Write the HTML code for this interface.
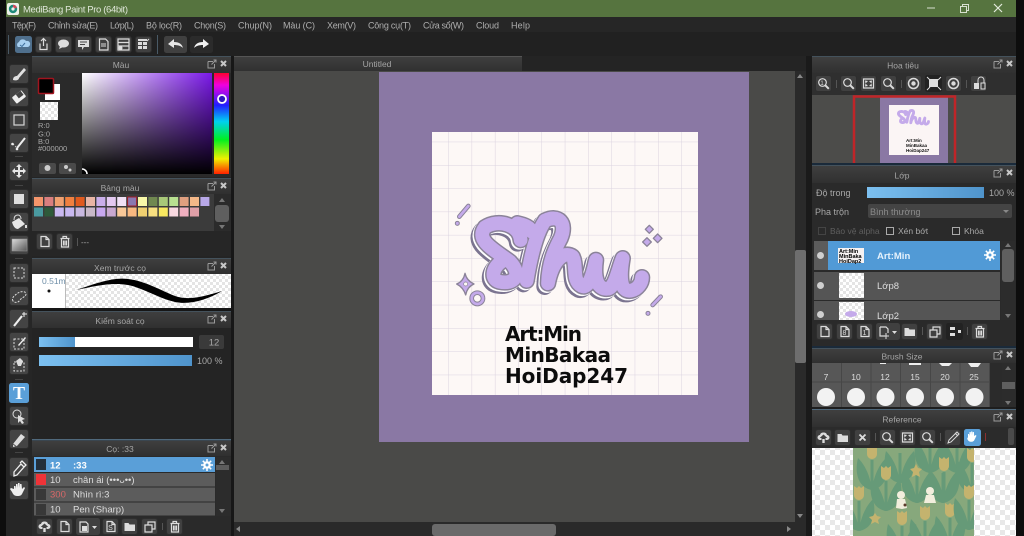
<!DOCTYPE html>
<html><head><meta charset="utf-8"><title>MediBang Paint Pro</title>
<style>
html,body{margin:0;padding:0;background:#0d0d0d;width:1024px;height:536px;overflow:hidden}
svg{display:block;filter:blur(.35px)}
text{font-family:"Liberation Sans","Noto Sans CJK SC",sans-serif;font-size:9px;fill:#a8a8a8}
.h{text-anchor:middle;fill:#a5a5a5;font-size:8.5px}
.s{fill:none;stroke:#dcdcdc;stroke-width:1.2}
.f{fill:#dcdcdc}
.m{font-size:9px;fill:#aeaeae}
</style></head><body>
<svg width="1024" height="536" viewBox="0 0 1024 536" xmlns="http://www.w3.org/2000/svg">
<defs>
<clipPath id="refclip"><rect x="853" y="448" width="121" height="88"/></clipPath>
<pattern id="ck" width="10" height="10" patternUnits="userSpaceOnUse"><rect width="10" height="10" fill="#fff"/><rect width="5" height="5" fill="#e8e8e8"/><rect x="5" y="5" width="5" height="5" fill="#e8e8e8"/></pattern>
<pattern id="ck2" width="6" height="6" patternUnits="userSpaceOnUse"><rect width="6" height="6" fill="#fff"/><rect width="3" height="3" fill="#e4e4e4"/><rect x="3" y="3" width="3" height="3" fill="#e4e4e4"/></pattern>
<pattern id="grid" x="432" y="132" width="23.3" height="23.3" patternUnits="userSpaceOnUse" patternTransform="translate(16.3,9.7)"><rect width="23.3" height="23.3" fill="#fdf8f6"/><path d="M0 0H23.3M0 0V23.3" stroke="#dbd3e0" stroke-width="1" fill="none"/></pattern>
<linearGradient id="hd" x1="0" y1="0" x2="0" y2="1"><stop offset="0" stop-color="#3f3f3f"/><stop offset="1" stop-color="#303030"/></linearGradient>
<linearGradient id="blue" x1="0" y1="0" x2="1" y2="0"><stop offset="0" stop-color="#7cc0f0"/><stop offset="1" stop-color="#4f94cc"/></linearGradient>
<linearGradient id="hue" x1="0" y1="0" x2="0" y2="1"><stop offset="0" stop-color="#ff0030"/><stop offset=".12" stop-color="#f000e0"/><stop offset=".32" stop-color="#2020ff"/><stop offset=".48" stop-color="#00d0f0"/><stop offset=".66" stop-color="#00f020"/><stop offset=".85" stop-color="#f0f000"/><stop offset="1" stop-color="#ff2000"/></linearGradient>
<linearGradient id="sat" x1="0" y1="0" x2="1" y2="0"><stop offset="0" stop-color="#fff"/><stop offset="1" stop-color="#7a18e8"/></linearGradient>
<linearGradient id="val" x1="0" y1="0" x2="0" y2="1"><stop offset="0" stop-color="#000" stop-opacity="0"/><stop offset="1" stop-color="#000"/></linearGradient>
<linearGradient id="gr" x1="0" y1="0" x2="1" y2="1"><stop offset="0" stop-color="#ddd"/><stop offset="1" stop-color="#555"/></linearGradient>

<g id="b17"><rect x=".5" y=".5" width="16" height="16" rx="2.5" fill="#404040" stroke="#2e2e2e"/></g>
<g id="b20"><rect x=".5" y=".5" width="19" height="19" rx="2.5" fill="#444" stroke="#2c2c2c"/></g>
<g id="hc"><path d="M0 1.5h5M0 1.5v6.5h6.5v-4" fill="none" stroke="#9a9a9a" stroke-width="1"/><path d="M3.5 4.5l4-4M5.5 0h2.5v2.5" fill="none" stroke="#9a9a9a"/><path d="M13 1l5 5M18 1l-5 5" stroke="#c8c8c8" stroke-width="2"/></g>

<g id="new"><use href="#b17"/><path class="s" d="M5 3.500h5l3 3v7H5zM10 3.500v3h3"/></g>
<g id="del"><use href="#b17"/><path class="s" d="M4.500 5.500h9M7 5.500V3.500h3.500v2M5.500 5.500v8.500h7V5.500M7.500 7.500v5M9 7.500v5M10.500 7.500v5" stroke-width="1"/></g>
<g id="fold"><use href="#b17"/><path class="f" d="M3.500 5h4l1 1.500h5.500V13h-10.500z"/></g>
<g id="copy"><use href="#b17"/><path class="s" d="M4 7h7v7H4zM7 7V4h7v7h-3"/></g>
<g id="up"><use href="#b17"/><path class="f" d="M8.500 3.500a3.500 3 0 0 1 3.500 2.500 2.500 2.500 0 0 1 0 5h-1.500v-2h1.800l-3.800-3.500-3.800 3.500h1.800v2H5a2.500 2.500 0 0 1 0-5 3.500 3 0 0 1 3.500-2.500zM7.300 10h2.400v4H7.300z"/></g>
<g id="mag"><use href="#b17"/><circle class="s" cx="7.500" cy="7.500" r="3.800"/><path d="M10.300 10.300l3.500 3.500" stroke="#dcdcdc" stroke-width="2"/></g>
<g id="fit"><use href="#b17"/><path class="s" d="M3.500 4h10v9h-10z"/><path class="f" d="M5 5.500l3 .5-2.500 2.500zM12 5.500l-3 .5 2.500 2.500zM5 11.500l3-.5-2.500-2.500zM12 11.500l-3-.5 2.500-2.500z"/></g>
<g id="rot"><use href="#b17"/><circle cx="8.500" cy="8.500" r="5" fill="none" stroke="#dcdcdc" stroke-width="1.500"/><circle cx="8.500" cy="8.500" r="2.200" fill="#dcdcdc"/></g>
<g id="gear"><circle cx="6" cy="6" r="3.800" fill="#fff"/><path d="M6 0v12M0 6h12M1.800 1.800l8.400 8.400M10.200 1.800l-8.400 8.400" stroke="#fff" stroke-width="1.500"/><circle cx="6" cy="6" r="1.500" fill="#5a9fd8"/></g>

<g id="shu">
<path d="M272 150C268 105 205 85 165 112C135 150 190 178 240 215C278 255 252 285 208 275C182 268 184 235 218 212"/>
<path d="M262 100C285 105 300 112 305 125"/>
<path d="M345 92C318 130 302 200 290 272"/>
<path d="M345 92C385 72 412 98 392 145C376 175 356 215 354 280C367 215 400 180 428 200C442 228 425 272 455 288C478 298 490 245 498 210C490 270 505 300 535 296C556 290 565 235 578 205C568 265 572 306 602 302C624 298 636 278 636 262"/>
</g>
<g id="lf">
<path d="M0 8V38" stroke="#669a78" stroke-width="3"/>
<path d="M0 38C-13 36-18 22-14 6C-8 12-2 22 0 38ZM0 38C13 36 18 22 14 6C8 12 2 22 0 38Z" fill="#669a78"/>
</g>
<path id="hd1" d="M-5-7L-2-5 0-7 2-5 5-7V2C5 5 2.500 7 0 7S-5 5-5 2Z" fill="#c4b36e"/>
<g id="tul"><use href="#lf"/><use href="#hd1"/></g>
</defs>

<rect width="1024" height="536" fill="#0d0d0d"/>
<!-- title bar -->
<rect x="6" width="1010" height="17" fill="#56743f"/>
<rect x="7" y="3" width="12" height="12" rx="2" fill="#eef2ea"/>
<circle cx="13" cy="9" r="4.200" fill="#1f8a7a"/><path d="M13 4.800a4.200 4.200 0 0 1 4 3l-4 1.200z" fill="#d04a5a"/><circle cx="13" cy="9" r="1.600" fill="#eef2ea"/>
<text x="23" y="12.500" textLength="105" style="font-size:9.500px;fill:#dfe6d8">MediBang Paint Pro (64bit)</text>
<path d="M927 8h8" stroke="#d8e0d0" stroke-width="1"/>
<path d="M960.500 6.500h6v6h-6zM962.500 6.500v-2h6v6h-2" fill="none" stroke="#d8e0d0"/>
<path d="M994 4l8 8M1002 4l-8 8" stroke="#e4ebdd" stroke-width="1.200"/>

<!-- menu -->
<rect x="6" y="17" width="1010" height="15" fill="#262626"/>
<text class="m" x="12" y="28.500" textLength="24">Tệp(F)</text>
<text class="m" x="48" y="28.500" textLength="50">Chỉnh sửa(E)</text>
<text class="m" x="110" y="28.500" textLength="24">Lớp(L)</text>
<text class="m" x="146" y="28.500" textLength="36">Bộ lọc(R)</text>
<text class="m" x="194" y="28.500" textLength="32">Chọn(S)</text>
<text class="m" x="238" y="28.500" textLength="34">Chụp(N)</text>
<text class="m" x="283" y="28.500" textLength="32">Màu (C)</text>
<text class="m" x="327" y="28.500" textLength="29">Xem(V)</text>
<text class="m" x="368" y="28.500" textLength="43">Công cụ(T)</text>
<text class="m" x="423" y="28.500" textLength="41">Cửa sổ(W)</text>
<text class="m" x="476" y="28.500" textLength="23">Cloud</text>
<text class="m" x="511" y="28.500" textLength="19">Help</text>
<!-- toolbar -->
<rect x="6" y="32" width="1010" height="24" fill="#212121"/>
<rect x="8" y="35" width="1" height="19" fill="#4a5a66"/><rect x="157" y="35" width="1" height="19" fill="#4a5a66"/>
<rect x="15" y="36" width="17" height="17" rx="2.500" fill="#4f6f8c"/>
<path d="M18 47a3 3 0 0 1 1-5 4 4 0 0 1 7-1 3 3 0 0 1 2 6z" fill="#a9d0f0"/><path d="M20 45l2 1.500 3-3.500" stroke="#3f6f9c" fill="none"/>
<use href="#b17" x="35" y="36"/><path class="s" d="M40 43.500v6h7v-6M43.500 46v-7M41 41l2.500-2.500L46 41"/>
<use href="#b17" x="55" y="36"/><ellipse cx="63.500" cy="43.500" rx="5.500" ry="4" fill="#dcdcdc"/><path d="M60 46l-1 3 4-2z" fill="#dcdcdc"/>
<use href="#b17" x="75" y="36"/><path class="f" d="M78 40h11v7h-5l-2 3v-3h-4z"/><path d="M80 42h7M80 44.500h5" stroke="#444"/>
<use href="#b17" x="95" y="36"/><path class="s" d="M99.500 39h6l2.500 2.500V50h-8.500z"/><path d="M101 44h5M101 46h5" stroke="#ddd"/>
<use href="#b17" x="115" y="36"/><path class="s" d="M118 39h11v11h-11zM118 42.500h11M118 46h11"/><circle cx="120.500" cy="48" r="2" fill="#ddd"/>
<use href="#b17" x="135" y="36"/><path class="f" d="M138 42h4v3h-4zM143 42h4v3h-4zM138 46h4v3h-4zM143 46h4v3h-4zM138 39h9v2h-9z"/><path d="M147 41l2-2" stroke="#ddd"/>
<rect x="164" y="36" width="23" height="17" rx="2.500" fill="#404040"/><path d="M168 44l6-5v3c5 0 8 2 9 6-2-2-5-3-9-3v3z" fill="#e6e6e6"/>
<rect x="190" y="36" width="23" height="17" rx="2.500" fill="#2b2b2b"/><path d="M209 44l-6-5v3c-5 0-8 2-9 6 2-2 5-3 9-3v3z" fill="#f2f2f2"/>

<!-- left tool column -->
<rect x="6" y="56" width="26" height="480" fill="#262626"/>
<use href="#b20" x="9" y="64"/><path d="M13 80c0-3 2-4 4-4l7-8 2 2-7 8c0 2-3 3-6 2z" fill="#e0e0e0"/>
<use href="#b20" x="9" y="87"/><rect x="13" y="93" width="12" height="8" rx="1" fill="#efefef" transform="rotate(-38 19 97)"/><rect x="18" y="93" width="6" height="5" fill="#444" transform="rotate(-38 19 97)"/>
<use href="#b20" x="9" y="110"/><rect x="14" y="115" width="10" height="10" fill="none" stroke="#d6d6d6" stroke-width="1.200"/>
<use href="#b20" x="9" y="133"/><path d="M17 148l8-10" stroke="#eee" stroke-width="2"/><path d="M13 144l4 4" stroke="#ccc" stroke-dasharray="1.500 1.500"/><circle cx="12.500" cy="144" r="1.300" fill="#eee"/><circle cx="17" cy="149" r="1.300" fill="#eee"/>
<rect x="15" y="156" width="8" height="1" fill="#444"/>
<use href="#b20" x="9" y="161"/><path d="M19 164l3 3h-2v3h3v-2l3 3-3 3v-2h-3v3h2l-3 3-3-3h2v-3h-3v2l-3-3 3-3v2h3v-3h-2z" fill="#e6e6e6"/>
<rect x="15" y="185" width="8" height="1" fill="#444"/>
<use href="#b20" x="9" y="189"/><rect x="14" y="194" width="10" height="10" fill="#dedede"/>
<use href="#b20" x="9" y="212"/><path d="M12 222l7-4 6 6-7 5c-3 0-5-3-6-7z" fill="#e6e6e6"/><path d="M14 220c0-4 2-5 4-5s3 2 3 4" stroke="#ddd" fill="none"/><path d="M26 225v3" stroke="#ddd" stroke-width="2"/>
<use href="#b20" x="9" y="235"/><rect x="12" y="239" width="15" height="12" fill="url(#gr)" stroke="#999" stroke-width=".5"/>
<rect x="15" y="258" width="8" height="1" fill="#444"/>
<use href="#b20" x="9" y="263"/><rect x="14" y="268" width="10" height="10" fill="none" stroke="#ddd" stroke-dasharray="2 1.500"/>
<use href="#b20" x="9" y="286"/><path d="M13 301c-2-3 2-6 5-8s8-2 8 1-4 3-6 6-5 3-7 1z" fill="none" stroke="#ddd" stroke-dasharray="2 1.300"/>
<use href="#b20" x="9" y="309"/><path d="M14 326l8-10" stroke="#eee" stroke-width="2.200"/><path d="M24 312v5M22 314h5" stroke="#eee"/>
<use href="#b20" x="9" y="332"/><rect x="14" y="339" width="10" height="10" fill="none" stroke="#ddd" stroke-dasharray="2 1.500"/><path d="M18 345l7-8 1 1-7 8z" fill="#eee"/>
<use href="#b20" x="9" y="355"/><rect x="14" y="362" width="10" height="9" fill="none" stroke="#ddd" stroke-dasharray="2 1.500"/><path d="M16 361l4-3 3 3-2 5h-3z" fill="#ddd"/>
<rect x="15" y="379" width="8" height="1" fill="#444"/>
<rect x="9" y="383" width="20" height="20" rx="2.500" fill="#5a9fd8"/><text x="19" y="399" style="font-family:'Liberation Serif',serif;font-size:18px;font-weight:bold;fill:#fff;text-anchor:middle">T</text>
<use href="#b20" x="9" y="406"/><circle cx="17" cy="414" r="4" fill="none" stroke="#ddd"/><path d="M18 415l7 4-3 1 2 3-2 1-2-3-2 2z" fill="#ddd"/>
<use href="#b20" x="9" y="429"/><path d="M13 444l8-10 4 3-8 9-4 1z" fill="#ddd"/><path d="M13 444l4 3" stroke="#555"/>
<rect x="15" y="452" width="8" height="1" fill="#444"/>
<use href="#b20" x="9" y="457"/><path d="M14 472l7-8 3 3-7 8-3 1zM20 463l2-2 4 4-2 2" fill="none" stroke="#eee" stroke-width="1.300"/>
<use href="#b20" x="9" y="480"/><path d="M14 489v-3l1.500 0 .5 3v-5h1.500l.5 4v-5h1.500l.5 5v-4h1.500l.5 5 2-2 1 1-3 6c-1 2-3 2-5 2-3 0-4-2-5-4l-2-3 1-1z" fill="#eee"/>

<!-- left panels -->
<rect x="32" y="56" width="199" height="480" fill="#242424"/>
<rect x="231" y="56" width="3" height="480" fill="#171717"/>

<!-- Mau -->
<rect x="32" y="56" width="199" height="17" fill="url(#hd)"/><rect x="32" y="56" width="199" height="1" fill="#44525c"/>
<text x="121" y="68" class="h">Màu</text><use href="#hc" x="208" y="60"/>
<rect x="32" y="73" width="199" height="104" fill="#2a2a2a"/>
<rect x="45" y="84" width="15" height="16" fill="#fff"/>
<rect x="38.500" y="78.500" width="15" height="15" fill="#000" stroke="#a0141e" stroke-width="1.500" rx="1"/>
<rect x="40" y="102" width="18" height="18" fill="url(#ck2)"/>
<text x="38" y="128" style="font-size:7.500px">R:0</text>
<text x="38" y="136.500" style="font-size:7.500px">G:0</text>
<text x="38" y="144" style="font-size:7.500px">B:0</text>
<text x="38" y="151" style="font-size:7.500px">#000000</text>
<rect x="39" y="163" width="17" height="11" rx="2" fill="#4a4a4a"/><circle cx="47.500" cy="168" r="3" fill="#ccc"/>
<rect x="59" y="163" width="17" height="11" rx="2" fill="#4a4a4a"/><circle cx="66" cy="167" r="2" fill="#ccc"/><circle cx="70" cy="170" r="1.500" fill="#ccc"/>
<rect x="82" y="73" width="130" height="101" fill="url(#sat)"/><rect x="82" y="73" width="130" height="101" fill="url(#val)"/>
<path d="M82 169a5 5 0 0 1 5 5" stroke="#fff" fill="none" stroke-width="1.500"/>
<rect x="214" y="73" width="15" height="101" fill="url(#hue)"/>
<circle cx="222" cy="99" r="4" fill="#3018c0" stroke="#fff" stroke-width="1.800"/>

<!-- Bang mau -->
<rect x="32" y="178" width="199" height="1" fill="#44525c"/>
<rect x="32" y="179" width="199" height="15" fill="url(#hd)"/>
<text x="120" y="191" class="h">Bảng màu</text><use href="#hc" x="208" y="182"/>
<rect x="32" y="194" width="199" height="37" fill="#3b3b3b"/>
<rect x="34" y="197" width="9" height="9" fill="#f4956b"/><rect x="44.400" y="197" width="9" height="9" fill="#d97f7f"/><rect x="54.800" y="197" width="9" height="9" fill="#f0a070"/><rect x="65.200" y="197" width="9" height="9" fill="#f08040"/><rect x="75.600" y="197" width="9" height="9" fill="#e05a1e"/><rect x="86" y="197" width="9" height="9" fill="#e8b5a5"/><rect x="96.400" y="197" width="9" height="9" fill="#c9aeea"/><rect x="106.800" y="197" width="9" height="9" fill="#e3c9f0"/><rect x="117.200" y="197" width="9" height="9" fill="#f0e0f5"/><rect x="127.600" y="197" width="9" height="9" fill="#8a78b0" stroke="#a0202a"/><rect x="138" y="197" width="9" height="9" fill="#f8f8a8"/><rect x="148.400" y="197" width="9" height="9" fill="#708850"/><rect x="158.800" y="197" width="9" height="9" fill="#a8c878"/><rect x="169.200" y="197" width="9" height="9" fill="#b8e090"/><rect x="179.600" y="197" width="9" height="9" fill="#e0a080"/><rect x="190" y="197" width="9" height="9" fill="#f4b888"/><rect x="200.400" y="197" width="9" height="9" fill="#b8a8e8"/>
<rect x="34" y="207.500" width="9" height="9" fill="#4a9aa0"/><rect x="44.400" y="207.500" width="9" height="9" fill="#2e5a3a"/><rect x="54.800" y="207.500" width="9" height="9" fill="#c9b8f0"/><rect x="65.200" y="207.500" width="9" height="9" fill="#c8b8f0"/><rect x="75.600" y="207.500" width="9" height="9" fill="#c8b8e0"/><rect x="86" y="207.500" width="9" height="9" fill="#c8b8c8"/><rect x="96.400" y="207.500" width="9" height="9" fill="#c8a8f0"/><rect x="106.800" y="207.500" width="9" height="9" fill="#c8a8d0"/><rect x="117.200" y="207.500" width="9" height="9" fill="#f8c898"/><rect x="127.600" y="207.500" width="9" height="9" fill="#f8b880"/><rect x="138" y="207.500" width="9" height="9" fill="#f0d070"/><rect x="148.400" y="207.500" width="9" height="9" fill="#f8e080"/><rect x="158.800" y="207.500" width="9" height="9" fill="#f8e860"/><rect x="169.200" y="207.500" width="9" height="9" fill="#f8d8e0"/><rect x="179.600" y="207.500" width="9" height="9" fill="#f0b0c0"/><rect x="190" y="207.500" width="9" height="9" fill="#e0a0a8"/>
<rect x="214" y="194" width="17" height="37" fill="#2b2b2b"/>
<path d="M222 198l-3 4h6zM222 229l-3-4h6z" fill="#777"/>
<rect x="215" y="205" width="14" height="17" rx="3" fill="#5f5f5f"/>
<rect x="32" y="231" width="199" height="25" fill="#262626"/>
<use href="#new" x="36" y="233"/><use href="#del" x="56" y="233"/>
<rect x="77" y="238" width="1" height="8" fill="#555"/>
<text x="81" y="245" style="font-size:8px">---</text>

<!-- Xem truoc co -->
<rect x="32" y="258" width="199" height="1" fill="#44525c"/>
<rect x="32" y="259" width="199" height="15" fill="url(#hd)"/>
<text x="120" y="271" class="h">Xem trước cọ</text><use href="#hc" x="208" y="262"/>
<rect x="32" y="274" width="199" height="34" fill="url(#ck2)"/>
<rect x="32" y="274" width="33" height="34" fill="#fff"/><rect x="65" y="274" width="1" height="34" fill="#bbb"/>
<text x="42" y="284" style="font-size:8.500px;fill:#6f8fa8">0.51m</text>
<circle cx="49" cy="291" r="1.500" fill="#111"/>
<path d="M76 290C95 284 112 277 128 279C145 281 160 290 175 296C190 301 205 296 222 291C207 300 190 305 175 302C158 298 143 288 128 285C112 282 95 286 76 290Z" fill="#000"/>
<rect x="32" y="308" width="199" height="3" fill="#161616"/>

<!-- Kiem soat co -->
<rect x="32" y="311" width="199" height="1" fill="#44525c"/>
<rect x="32" y="312" width="199" height="16" fill="url(#hd)"/>
<text x="120" y="324" class="h">Kiểm soát cọ</text><use href="#hc" x="208" y="315"/>
<rect x="39" y="337" width="154" height="10" fill="#fff"/><rect x="39" y="337" width="36" height="10" fill="url(#blue)"/>
<rect x="199" y="335" width="25" height="14" rx="2" fill="#3a3a3a"/><text x="214" y="345.500" style="font-size:9.500px;text-anchor:middle">12</text>
<rect x="39" y="355" width="153" height="11" fill="url(#blue)"/>
<text x="197" y="364" style="font-size:9px">100 %</text>

<!-- Co -->
<rect x="32" y="439" width="199" height="1.500" fill="#50697c"/>
<rect x="32" y="441" width="199" height="15" fill="url(#hd)"/>
<text x="120" y="452" class="h">Cọ: :33</text><use href="#hc" x="208" y="444"/>
<rect x="32" y="456" width="199" height="80" fill="#2a2a2a"/>
<rect x="34" y="457" width="181" height="15" fill="#5a9fd8"/>
<rect x="34" y="473" width="181" height="13.500" fill="#5c5c5c"/><rect x="34" y="487.500" width="181" height="14" fill="#5c5c5c"/><rect x="34" y="502.500" width="181" height="13" fill="#5c5c5c"/>
<rect x="36" y="459" width="10" height="11" fill="#232f3b"/><rect x="36" y="474" width="10" height="11" fill="#ef3338"/><rect x="36" y="489" width="10" height="11" fill="#383838"/><rect x="36" y="504" width="10" height="11" fill="#383838"/>
<text x="50" y="468.500" style="font-size:9.500px;font-weight:bold;fill:#fff">12</text><text x="73" y="468.500" style="font-size:9.500px;font-weight:bold;fill:#fff">:33</text>
<use href="#gear" x="201" y="459"/>
<text x="50" y="483" style="font-size:9.500px;fill:#ddd">10</text><text x="73" y="483" style="font-size:9.500px;fill:#ddd">chân ái (•••ᴗ••)</text>
<text x="50" y="497.500" style="font-size:9.500px;fill:#d86868">300</text><text x="73" y="497.500" style="font-size:9.500px;fill:#ddd">Nhìn rì:3</text>
<text x="50" y="512.500" style="font-size:9.500px;fill:#ddd">10</text><text x="73" y="512.500" style="font-size:9.500px;fill:#ddd">Pen (Sharp)</text>
<rect x="216" y="457" width="15" height="59" fill="#2c2c2c"/>
<path d="M222 460l-3 4h6zM222 513l-3-4h6z" fill="#777"/><rect x="216" y="465" width="13" height="5" fill="#5c5c5c"/>
<use href="#up" x="36" y="518"/><use href="#new" x="56" y="518"/>
<rect x="76" y="518" width="24" height="17" rx="2.500" fill="#404040"/><path class="s" d="M80 522h6l2 2v8h-8z"/><rect x="82" y="526" width="5" height="5" fill="#ddd"/><path d="M92 526h5l-2.500 3z" fill="#ddd"/>
<use href="#new" x="102" y="518"/><text x="110.500" y="530" style="font-size:7px;text-anchor:middle;fill:#ddd">S</text>
<use href="#fold" x="121" y="518"/><use href="#copy" x="141" y="518"/>
<rect x="162" y="523" width="1" height="7" fill="#555"/>
<use href="#del" x="166" y="518"/>

<!-- canvas area -->
<rect x="234" y="56" width="578" height="480" fill="#242424"/>
<rect x="234" y="56" width="288" height="15" fill="url(#hd)"/>
<rect x="234" y="56" width="288" height="1" fill="#555"/>
<text x="377" y="67" class="h">Untitled</text>
<rect x="234" y="71" width="561" height="451" fill="#4a4a48"/>
<rect x="379" y="72" width="370" height="370" fill="#8a78a4"/>
<rect x="432" y="132" width="266" height="263" fill="url(#grid)"/>

<!-- Shu lettering -->
<g transform="translate(430,190) scale(.3333)" fill="none" stroke-linecap="round" stroke-linejoin="round">
<use href="#shu" stroke="#7b7490" stroke-width="50" transform="translate(-10,10)"/>
<use href="#shu" stroke="#fff" stroke-width="50" transform="translate(-4,4)"/>
<use href="#shu" stroke="#8b8399" stroke-width="50"/>
<use href="#shu" stroke="#c4aaea" stroke-width="41"/>
<path d="M88 80L115 48" stroke="#8b8399" stroke-width="14"/><path d="M88 80L115 48" stroke="#c4aaea" stroke-width="8"/>
<circle cx="82" cy="100" r="6" fill="#c4aaea" stroke="#8b8399" stroke-width="3"/>
<path d="M668 345L692 320" stroke="#8b8399" stroke-width="14"/><path d="M668 345L692 320" stroke="#c4aaea" stroke-width="8"/>
<circle cx="654" cy="370" r="6" fill="#c4aaea" stroke="#8b8399" stroke-width="3"/>
<path d="M105 250Q110 272 132 282Q112 290 107 315Q100 292 80 282Q100 274 105 250Z" fill="#c4aaea" stroke="#8b8399" stroke-width="4"/>
<circle cx="107" cy="282" r="6" fill="#fdf8f6" stroke="#8b8399" stroke-width="2"/>
<circle cx="142" cy="325" r="17" fill="none" stroke="#8b8399" stroke-width="14"/><circle cx="142" cy="325" r="17" fill="none" stroke="#c4aaea" stroke-width="8"/>
<path d="M658 106l12 12-12 12-12-12zM683 132l13 13-13 13-13-13zM651 143l13 13-13 13-13-13z" fill="#c4aaea" stroke="#8b8399" stroke-width="4"/>
</g>
<text x="505" y="341" textLength="77" style="font-family:'DejaVu Sans',sans-serif;font-size:20px;font-weight:bold;fill:#0c0c0c">Art:Min</text>
<text x="505" y="362" textLength="106" style="font-family:'DejaVu Sans',sans-serif;font-size:20px;font-weight:bold;fill:#0c0c0c">MinBakaa</text>
<text x="505" y="383" textLength="123" style="font-family:'DejaVu Sans',sans-serif;font-size:20px;font-weight:bold;fill:#0c0c0c">HoiDap247</text>

<!-- canvas scrollbars -->
<rect x="234" y="522" width="572" height="14" fill="#2a2a2a"/>
<path d="M236 529l4-3v6z" fill="#888"/><path d="M791 529l-4-3v6z" fill="#888"/>
<rect x="432" y="524" width="124" height="12" rx="3" fill="#6a6a6a"/>
<rect x="795" y="71" width="11" height="451" fill="#2a2a2a"/>
<path d="M800 74l-3 4h6zM800 518l-3-4h6z" fill="#888"/>
<rect x="795" y="250" width="11" height="113" rx="2" fill="#6e6e6e"/>
<rect x="806" y="56" width="6" height="480" fill="#1a1a1a"/>

<!-- right panels -->
<rect x="812" y="56" width="204" height="480" fill="#2a2a2a"/>
<rect x="812" y="56" width="204" height="1" fill="#44525c"/>
<rect x="812" y="57" width="204" height="16" fill="url(#hd)"/>
<text x="903" y="68.500" class="h">Hoa tiêu</text><use href="#hc" x="994" y="60"/>
<rect x="812" y="73" width="204" height="22" fill="#2f2f2f"/>
<use href="#mag" x="815" y="75"/><text x="822" y="85" style="font-size:6px;fill:#ddd;text-anchor:middle">1</text>
<rect x="836" y="80" width="1" height="8" fill="#555"/>
<use href="#mag" x="840" y="75"/><use href="#fit" x="860" y="75"/><use href="#mag" x="880" y="75"/>
<rect x="901" y="80" width="1" height="8" fill="#555"/>
<use href="#rot" x="905" y="75"/>
<rect x="925" y="75" width="17" height="17" rx="2.500" fill="#222"/><rect x="929" y="79" width="9" height="8" fill="#ddd"/><path d="M927 77l3 3M941 77l-3 3M927 90l3-3M941 90l-3-3" stroke="#ddd"/>
<use href="#rot" x="945" y="75"/>
<rect x="966" y="80" width="1" height="8" fill="#555"/>
<use href="#b17" x="970" y="75"/><path d="M974 83h5v6h-5z" fill="#ddd"/><path d="M978 83v-3a3 3 0 0 1 6 0v3M981 83h4v6h-4z" fill="none" stroke="#ddd"/>
<rect x="812" y="95" width="204" height="68" fill="#4c4c4a"/>
<rect x="880" y="97" width="68" height="66" fill="#8a78a4"/>
<rect x="889" y="105" width="50" height="50" fill="#fbf5f5"/>
<g transform="translate(889,105) scale(.188) translate(-2,-61)"><g transform="translate(0,0)" fill="none" stroke="#c4aaea" stroke-width="16" stroke-linecap="round" stroke-linejoin="round" opacity="1"><g transform="translate(0,62) scale(.3333)"><use href="#shu" stroke-width="46"/></g></g></g>
<text x="906" y="142" style="font-size:4.500px;font-weight:bold;fill:#111">Art:Min</text>
<text x="906" y="147" style="font-size:4.500px;font-weight:bold;fill:#111">MinBakaa</text>
<text x="906" y="152" style="font-size:4.500px;font-weight:bold;fill:#111">HoiDap247</text>
<path d="M854 163V96.500H955V163" fill="none" stroke="#c02528" stroke-width="2.500"/>
<rect x="812" y="163" width="204" height="2" fill="#1a2a3a"/>

<!-- Lop -->
<rect x="812" y="165" width="204" height="1" fill="#44525c"/>
<rect x="812" y="166" width="204" height="17" fill="url(#hd)"/>
<text x="902" y="178.500" class="h">Lớp</text><use href="#hc" x="994" y="169"/>
<rect x="812" y="183" width="204" height="163" fill="#2a2a2a"/>
<text x="816" y="196" style="font-size:9px">Độ trong</text>
<rect x="867" y="187" width="117" height="11" fill="url(#blue)"/>
<text x="989" y="196" style="font-size:9px">100 %</text>
<text x="815" y="215" style="font-size:9px">Pha trộn</text>
<rect x="868" y="204" width="144" height="14" rx="2" fill="#444"/>
<text x="870" y="215" style="font-size:9px;fill:#8a8a8a">Bình thường</text>
<path d="M1003 210h6l-3 3z" fill="#888"/>
<rect x="818.500" y="227.500" width="7" height="7" fill="none" stroke="#444"/><text x="830" y="234" style="font-size:8.500px;fill:#5f5f5f">Bảo vệ alpha</text>
<rect x="886.500" y="227.500" width="7" height="7" fill="none" stroke="#aaa"/><text x="898" y="234" style="font-size:8.500px">Xén bớt</text>
<rect x="952.500" y="227.500" width="7" height="7" fill="none" stroke="#aaa"/><text x="964" y="234" style="font-size:8.500px">Khóa</text>
<rect x="814" y="241" width="186" height="29" fill="#5c5c5c"/><rect x="828" y="241" width="172" height="29" fill="#519ad6"/>
<rect x="814" y="272" width="186" height="28" fill="#555"/>
<rect x="814" y="301" width="186" height="19" fill="#555"/>
<circle cx="820.500" cy="255.500" r="3.500" fill="#cfcfcf"/><circle cx="820.500" cy="285.500" r="3.500" fill="#cfcfcf"/><circle cx="820.500" cy="314.500" r="3.500" fill="#cfcfcf"/>
<rect x="838" y="248" width="26" height="15" fill="#f6f2f2"/>
<text x="839" y="253" style="font-size:5.500px;font-weight:bold;fill:#000">Art:Min</text>
<text x="839" y="258" style="font-size:5.500px;font-weight:bold;fill:#000">MinBaka</text>
<text x="839" y="263" style="font-size:5.500px;font-weight:bold;fill:#000">HoiDap2</text>
<text x="877" y="259" style="font-size:9.500px;font-weight:bold;fill:#e6f2fc">Art:Min</text>
<use href="#gear" x="984" y="249"/>
<rect x="839" y="273" width="25" height="25" fill="url(#ck2)"/><text x="877" y="289" style="font-size:9.500px;fill:#ddd">Lớp8</text>
<rect x="839" y="302" width="25" height="18" fill="url(#ck2)"/><ellipse cx="851" cy="314" rx="6" ry="3" fill="#c4aaea"/><text x="877" y="319" style="font-size:9.500px;fill:#ddd">Lớp2</text>
<rect x="1001" y="241" width="14" height="79" fill="#2c2c2c"/>
<path d="M1008 243l-3 4h6zM1008 318l-3-4h6z" fill="#777"/>
<rect x="1002" y="249" width="12" height="33" rx="3" fill="#5f5f5f"/>
<use href="#new" x="816" y="323"/>
<use href="#new" x="836" y="323"/><text x="844.500" y="335" style="font-size:7px;text-anchor:middle;fill:#ddd">8</text>
<use href="#new" x="856" y="323"/><text x="864.500" y="335" style="font-size:7px;text-anchor:middle;fill:#ddd">1</text>
<rect x="876" y="323" width="24" height="17" rx="2.500" fill="#404040"/><path class="s" d="M880 327h6l2 2v4M880 327v9h5"/><path d="M886 333v6M883 336h6" stroke="#ddd"/><path d="M892 331h5l-2.500 3z" fill="#ddd"/>
<use href="#fold" x="901" y="323"/>
<rect x="922" y="327" width="1" height="8" fill="#555"/>
<use href="#copy" x="926" y="323"/>
<rect x="946" y="323" width="17" height="17" rx="2.500" fill="#222"/><path d="M950 327h5v3h-5zM950 333h5v3h-5zM958 330h3v3h-3z" fill="#ddd"/>
<rect x="967" y="327" width="1" height="8" fill="#555"/>
<use href="#del" x="971" y="323"/>
<rect x="812" y="346" width="204" height="2" fill="#1a2a3a"/>

<!-- Brush Size -->
<rect x="812" y="348" width="204" height="1" fill="#44525c"/>
<rect x="812" y="349" width="204" height="14" fill="url(#hd)"/>
<text x="902" y="359.500" class="h">Brush Size</text><use href="#hc" x="994" y="351"/>
<rect x="812" y="363" width="178" height="44" fill="#575757"/>
<rect x="990" y="363" width="26" height="44" fill="#2b2b2b"/>
<path d="M812 382h178" stroke="#474747"/>
<path d="M841.500 363v44M871 363v44M900.500 363v44M930.500 363v44M960 363v44M989.500 363v44" stroke="#474747"/>
<path d="M880 363h6v1h-6zM909 363h12v2h-12zM939 363h13l-3 3h-7zM968 363h13l-3 4h-7z" fill="#eee"/>
<text x="826" y="380" style="font-size:8.500px;text-anchor:middle;fill:#ddd">7</text><text x="856" y="380" style="font-size:8.500px;text-anchor:middle;fill:#ddd">10</text><text x="885" y="380" style="font-size:8.500px;text-anchor:middle;fill:#ddd">12</text><text x="915" y="380" style="font-size:8.500px;text-anchor:middle;fill:#ddd">15</text><text x="945" y="380" style="font-size:8.500px;text-anchor:middle;fill:#ddd">20</text><text x="974" y="380" style="font-size:8.500px;text-anchor:middle;fill:#ddd">25</text>
<circle cx="826" cy="397" r="9" fill="#f2f2f2"/><circle cx="856" cy="397" r="9" fill="#f2f2f2"/><circle cx="885.500" cy="397" r="9" fill="#f2f2f2"/><circle cx="915" cy="397" r="9" fill="#f2f2f2"/><circle cx="945" cy="397" r="9" fill="#f2f2f2"/><circle cx="974.500" cy="397" r="9" fill="#f2f2f2"/>
<rect x="1002" y="363" width="13" height="44" fill="#2c2c2c"/><path d="M1008 366l-3 4h6zM1008 405l-3-4h6z" fill="#777"/><rect x="1002" y="382" width="13" height="7" fill="#5f5f5f"/>
<rect x="812" y="407" width="204" height="2" fill="#1e1e1e"/>

<!-- Reference -->
<rect x="812" y="409" width="204" height="1" fill="#50697c"/>
<rect x="812" y="410" width="204" height="17" fill="url(#hd)"/>
<text x="902" y="422.500" class="h">Reference</text><use href="#hc" x="994" y="413"/>
<rect x="812" y="427" width="204" height="21" fill="#2b2b2b"/>
<use href="#up" x="815" y="429"/><use href="#fold" x="834" y="429"/>
<use href="#b17" x="854" y="429"/><path d="M859.500 434.500l6 6M865.500 434.500l-6 6" stroke="#ddd" stroke-width="1.800"/>
<rect x="875" y="433" width="1" height="8" fill="#555"/>
<use href="#mag" x="879" y="429"/><use href="#fit" x="899" y="429"/><use href="#mag" x="919" y="429"/>
<rect x="940" y="433" width="1" height="8" fill="#555"/>
<use href="#b17" x="944" y="429"/><path d="M948 443l1-3 8-8 2 2-8 8zM955 433l3 3" fill="none" stroke="#ddd"/>
<rect x="964" y="429" width="17" height="17" rx="2.500" fill="#5a9fd8"/><path d="M968 437v-3h1l.5 2v-4h1.200l.4 3v-3.500h1.200l.4 3.500v-3h1.200l.3 4 1.500-1 .8.700-2 4c-.8 1.800-2 2-3.500 2-2.200 0-3-1.300-3.800-3z" fill="#fff"/>
<rect x="985" y="433" width="1" height="8" fill="#8a3030"/>
<rect x="1008" y="428" width="6" height="17" rx="2" fill="#4a4a4a"/>
<rect x="812" y="448" width="204" height="88" fill="url(#ck)"/>
<g clip-path="url(#refclip)">
<rect x="853" y="448" width="121" height="88" fill="#87a87c"/>
<use href="#lf" x="900" y="445"/><use href="#lf" x="930" y="435"/><use href="#lf" x="957" y="435"/><use href="#lf" x="917" y="465"/><use href="#lf" x="943" y="465"/>
<use href="#tul" x="872" y="452"/><use href="#tul" x="886" y="473"/><use href="#tul" x="944" y="464"/><use href="#tul" x="972" y="455"/>
<use href="#tul" x="859" y="493"/><use href="#tul" x="902" y="518"/><use href="#tul" x="925" y="513"/><use href="#tul" x="950" y="510"/><use href="#tul" x="969" y="492"/>
<path d="M916 464l-2 4-4 1 3 3-1 5 4-2 4 2-1-5 3-3-4-1zM875 513l-2 3-4 1 3 3-1 4 4-2 4 2-1-4 3-3-4-1z" fill="#c4b36e"/>
<circle cx="901" cy="495" r="4" fill="#f2eedd"/><path d="M897 499h8l2 9-5 1-6-1z" fill="#f2eedd"/>
<circle cx="930" cy="491" r="4" fill="#f2eedd"/><path d="M926 495h8l2 8h-12z" fill="#f2eedd"/>
<circle cx="905" cy="505" r="1.500" fill="#5a3a2a"/>
</g>
</svg>
</body></html>
